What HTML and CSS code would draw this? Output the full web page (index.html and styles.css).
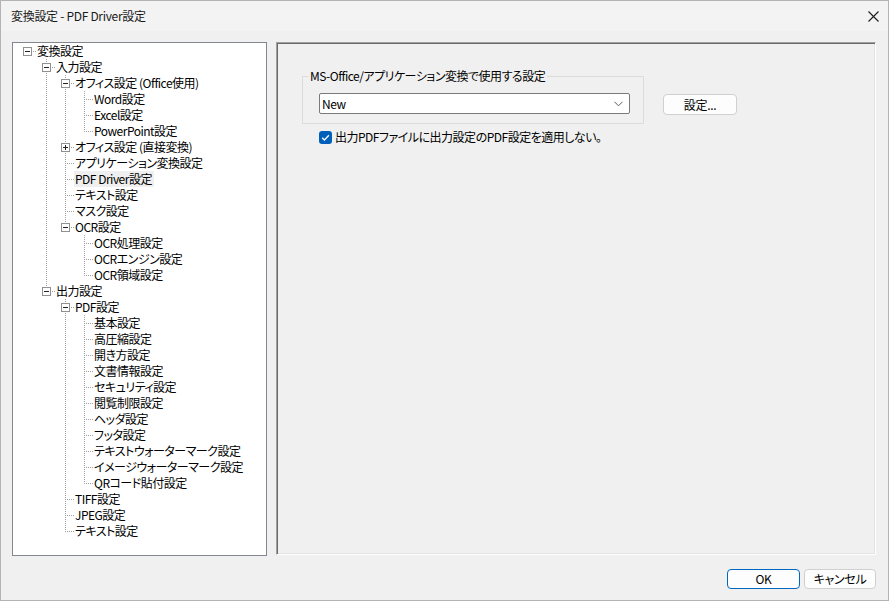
FILE: index.html
```html
<!DOCTYPE html>
<html lang="ja">
<head>
<meta charset="utf-8">
<title>変換設定 - PDF Driver設定</title>
<link rel="stylesheet" href="styles.css">
</head>
<body>
<div class="window">
  <div class="titlebar">
    <span class="title">変換設定 - PDF Driver設定</span>
    <svg class="close" width="11" height="11" viewBox="0 0 11 11"><path d="M0.5 0.5 L10.5 10.5 M10.5 0.5 L0.5 10.5" stroke="#1b1b1b" stroke-width="1.1" fill="none"/></svg>
  </div>
  <div class="main">
    <div class="tree">
      <div class="row"><span class="c r"><span class="bx minus"></span></span><span class="lbl">変換設定</span></div>
      <div class="row"><span class="c"></span><span class="c t"><span class="bx minus"></span></span><span class="lbl">入力設定</span></div>
      <div class="row"><span class="c"></span><span class="c v"></span><span class="c t"><span class="bx minus"></span></span><span class="lbl">オフィス設定 (Office使用)</span></div>
      <div class="row"><span class="c"></span><span class="c v"></span><span class="c v"></span><span class="c t"></span><span class="lbl">Word設定</span></div>
      <div class="row"><span class="c"></span><span class="c v"></span><span class="c v"></span><span class="c t"></span><span class="lbl">Excel設定</span></div>
      <div class="row"><span class="c"></span><span class="c v"></span><span class="c v"></span><span class="c l"></span><span class="lbl">PowerPoint設定</span></div>
      <div class="row"><span class="c"></span><span class="c v"></span><span class="c t"><span class="bx plus"></span></span><span class="lbl">オフィス設定 (直接変換)</span></div>
      <div class="row"><span class="c"></span><span class="c v"></span><span class="c t"></span><span class="lbl">アプリケーション変換設定</span></div>
      <div class="row"><span class="c"></span><span class="c v"></span><span class="c t"></span><span class="lbl sel">PDF Driver設定</span></div>
      <div class="row"><span class="c"></span><span class="c v"></span><span class="c t"></span><span class="lbl">テキスト設定</span></div>
      <div class="row"><span class="c"></span><span class="c v"></span><span class="c t"></span><span class="lbl">マスク設定</span></div>
      <div class="row"><span class="c"></span><span class="c v"></span><span class="c l"><span class="bx minus"></span></span><span class="lbl">OCR設定</span></div>
      <div class="row"><span class="c"></span><span class="c v"></span><span class="c"></span><span class="c t"></span><span class="lbl">OCR処理設定</span></div>
      <div class="row"><span class="c"></span><span class="c v"></span><span class="c"></span><span class="c t"></span><span class="lbl">OCRエンジン設定</span></div>
      <div class="row"><span class="c"></span><span class="c v"></span><span class="c"></span><span class="c l"></span><span class="lbl">OCR領域設定</span></div>
      <div class="row"><span class="c"></span><span class="c l"><span class="bx minus"></span></span><span class="lbl">出力設定</span></div>
      <div class="row"><span class="c"></span><span class="c"></span><span class="c t"><span class="bx minus"></span></span><span class="lbl">PDF設定</span></div>
      <div class="row"><span class="c"></span><span class="c"></span><span class="c v"></span><span class="c t"></span><span class="lbl">基本設定</span></div>
      <div class="row"><span class="c"></span><span class="c"></span><span class="c v"></span><span class="c t"></span><span class="lbl">高圧縮設定</span></div>
      <div class="row"><span class="c"></span><span class="c"></span><span class="c v"></span><span class="c t"></span><span class="lbl">開き方設定</span></div>
      <div class="row"><span class="c"></span><span class="c"></span><span class="c v"></span><span class="c t"></span><span class="lbl">文書情報設定</span></div>
      <div class="row"><span class="c"></span><span class="c"></span><span class="c v"></span><span class="c t"></span><span class="lbl">セキュリティ設定</span></div>
      <div class="row"><span class="c"></span><span class="c"></span><span class="c v"></span><span class="c t"></span><span class="lbl">閲覧制限設定</span></div>
      <div class="row"><span class="c"></span><span class="c"></span><span class="c v"></span><span class="c t"></span><span class="lbl">ヘッダ設定</span></div>
      <div class="row"><span class="c"></span><span class="c"></span><span class="c v"></span><span class="c t"></span><span class="lbl">フッタ設定</span></div>
      <div class="row"><span class="c"></span><span class="c"></span><span class="c v"></span><span class="c t"></span><span class="lbl">テキストウォーターマーク設定</span></div>
      <div class="row"><span class="c"></span><span class="c"></span><span class="c v"></span><span class="c t"></span><span class="lbl">イメージウォーターマーク設定</span></div>
      <div class="row"><span class="c"></span><span class="c"></span><span class="c v"></span><span class="c l"></span><span class="lbl">QRコード貼付設定</span></div>
      <div class="row"><span class="c"></span><span class="c"></span><span class="c t"></span><span class="lbl">TIFF設定</span></div>
      <div class="row"><span class="c"></span><span class="c"></span><span class="c t"></span><span class="lbl">JPEG設定</span></div>
      <div class="row"><span class="c"></span><span class="c"></span><span class="c l"></span><span class="lbl">テキスト設定</span></div>
    </div>
    <div class="panel">
      <div class="group-row">
        <div class="group">
          <div class="group-title">MS-Office/アプリケーション変換で使用する設定</div>
          <div class="combo">
            <span class="combo-text">New</span>
            <svg class="chev" width="9" height="6" viewBox="0 0 9 6"><path d="M0.5 0.8 L4.5 4.8 L8.5 0.8" stroke="#5a5a5a" stroke-width="1" fill="none"/></svg>
          </div>
        </div>
        <button class="btn btn-set">設定...</button>
      </div>
      <div class="check-row">
        <span class="checkbox"><svg width="13" height="13" viewBox="0 0 13 13"><path d="M3.2 6.8 L5.4 9 L9.9 4.2" stroke="#fff" stroke-width="1.3" fill="none"/></svg></span>
        <span class="check-label">出力PDFファイルに出力設定のPDF設定を適用しない。</span>
      </div>
    </div>
  </div>
  <div class="footer">
    <button class="btn ok">OK</button>
    <button class="btn cancel">キャンセル</button>
  </div>
</div>
</body>
</html>
```

FILE: styles.css
```css
html, body {
  margin: 0;
  padding: 0;
}
body {
  font-family: "Noto Sans CJK JP", "Noto Sans", sans-serif;
  font-size: 12px;
  font-feature-settings: "palt";
  letter-spacing: -0.5px;
  color: #000;
  background: #f0f0f0;
}
.window {
  width: 889px;
  height: 601px;
  box-sizing: border-box;
  border: 1px solid #b4b4b4;
  background: #f0f0f0;
  display: flex;
  flex-direction: column;
}
.titlebar {
  height: 30px;
  flex: none;
  background: #f3f3f3;
  display: flex;
  align-items: center;
  padding-left: 10px;
}
.title {
  flex: 1;
  line-height: 16px;
  color: #1a1a1a;
  letter-spacing: -0.3px;
}
.close {
  flex: none;
  margin-right: 9px;
}
.main {
  display: flex;
  gap: 9px;
  padding: 11px 12px 0 11px;
  flex: none;
}
.tree {
  width: 255px;
  height: 514px;
  box-sizing: border-box;
  border: 1px solid #828790;
  background: #fff;
  padding-left: 4px;
  flex: none;
}
.row {
  display: flex;
  height: 16px;
  align-items: flex-start;
}
.c {
  display: block;
  width: 19px;
  height: 16px;
  flex: none;
  background-repeat: no-repeat;
}
.v {
  background-image: repeating-linear-gradient(to bottom, #a0a0a0 0 1px, transparent 1px 2px);
  background-position: 10px 0;
  background-size: 1px 16px;
}
.t {
  background-image:
    repeating-linear-gradient(to bottom, #a0a0a0 0 1px, transparent 1px 2px),
    repeating-linear-gradient(to right, #a0a0a0 0 1px, transparent 1px 2px);
  background-position: 10px 0, 12px 8px;
  background-size: 1px 16px, 7px 1px;
}
.l {
  background-image:
    repeating-linear-gradient(to bottom, #a0a0a0 0 1px, transparent 1px 2px),
    repeating-linear-gradient(to right, #a0a0a0 0 1px, transparent 1px 2px);
  background-position: 10px 0, 12px 8px;
  background-size: 1px 9px, 7px 1px;
}
.r {
  background-image: repeating-linear-gradient(to right, #a0a0a0 0 1px, transparent 1px 2px);
  background-position: 12px 8px;
  background-size: 7px 1px;
}
.bx {
  display: block;
  width: 9px;
  height: 9px;
  box-sizing: border-box;
  margin: 4px 0 0 6px;
  border: 1px solid #919191;
  background-color: #fff;
  background-repeat: no-repeat;
}
.minus {
  background-image: linear-gradient(#222, #222);
  background-position: 1px 3px;
  background-size: 5px 1px;
}
.plus {
  background-image: linear-gradient(#222, #222), linear-gradient(#222, #222);
  background-position: 1px 3px, 3px 1px;
  background-size: 5px 1px, 1px 5px;
}
.lbl {
  display: block;
  line-height: 16px;
  height: 16px;
  padding: 0 2px 0 1px;
  white-space: nowrap;
}
.sel {
  background: #efefef;
}
.panel {
  width: 600px;
  height: 513px;
  box-sizing: border-box;
  border: 1px solid;
  border-color: #a0a0a0 #ffffff #ffffff #a0a0a0;
  box-shadow: inset 1px 1px 0 #696969, inset -1px -1px 0 #e3e3e3;
  background: #f0f0f0;
  flex: none;
}
.group-row {
  display: flex;
  align-items: flex-start;
  margin: 33px 0 0 25px;
}
.group {
  width: 342px;
  box-sizing: border-box;
  border: 1px solid #dcdcdc;
  padding: 0 14px 9px 16px;
  flex: none;
}
.group-title {
  display: block;
  width: max-content;
  margin: -9px 0 0 -11px;
  padding: 0 2px;
  height: 16px;
  line-height: 16px;
  background: #f0f0f0;
  white-space: nowrap;
}
.combo {
  margin-top: 9px;
  width: 311px;
  height: 21px;
  box-sizing: border-box;
  border: 1px solid #7a7a7a;
  border-radius: 2px;
  background: #fff;
  display: flex;
  align-items: center;
  padding: 0 6px 0 2px;
}
.combo-text {
  flex: 1;
  line-height: 16px;
}
.chev {
  flex: none;
}
.btn {
  font-family: inherit;
  font-size: 12px;
  font-feature-settings: "palt";
  letter-spacing: -0.3px;
  color: #000;
  box-sizing: border-box;
  border: 1px solid #d0d0d0;
  border-radius: 4px;
  background: #fdfdfd;
  padding: 0;
  line-height: 16px;
  flex: none;
}
.btn-set {
  width: 74px;
  height: 21px;
  margin: 18px 0 0 19px;
}
.check-row {
  display: flex;
  align-items: center;
  height: 16px;
  margin: 5px 0 0 42px;
}
.checkbox {
  width: 13px;
  height: 13px;
  border-radius: 3px;
  background: #005fb8;
  display: flex;
  flex: none;
}
.check-label {
  margin-left: 3px;
  line-height: 16px;
  white-space: nowrap;
}
.footer {
  display: flex;
  justify-content: flex-end;
  gap: 4px;
  padding: 13px 12px 0 0;
}
.ok {
  width: 73px;
  height: 20px;
  border-color: #0067c0;
}
.cancel {
  width: 72px;
  height: 20px;
}
```
